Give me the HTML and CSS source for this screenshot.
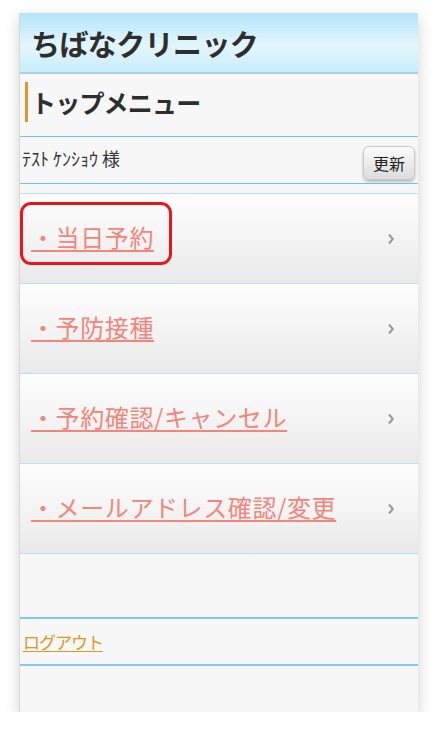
FILE: index.html
```html
<!DOCTYPE html>
<html lang="ja">
<head>
<meta charset="utf-8">
<title>ちばなクリニック</title>
<link rel="stylesheet" href="styles.css">
</head>
<body>
<div class="card">
  <header class="header"><h1>ちばなクリニック</h1></header>
  <div class="page-title"><h2>トップメニュー</h2></div>
  <div class="user-row">
    <span class="user-name">ﾃｽﾄ ｹﾝｼｮｳ 様</span>
    <button class="refresh">更新</button>
  </div>
  <div class="spacer-small"></div>
  <ul class="menu">
    <li class="menu-item first">
      <a href="#">・当日予約</a>
      <svg class="chev" width="8" height="12" viewBox="0 0 8 12"><path d="M2 1.5 L5.8 6 L2 10.5" fill="none" stroke="#999" stroke-width="2"/></svg>
      <span class="highlight"></span>
    </li>
    <li class="menu-item">
      <a href="#">・予防接種</a>
      <svg class="chev" width="8" height="12" viewBox="0 0 8 12"><path d="M2 1.5 L5.8 6 L2 10.5" fill="none" stroke="#999" stroke-width="2"/></svg>
    </li>
    <li class="menu-item">
      <a href="#">・予約確認/キャンセル</a>
      <svg class="chev" width="8" height="12" viewBox="0 0 8 12"><path d="M2 1.5 L5.8 6 L2 10.5" fill="none" stroke="#999" stroke-width="2"/></svg>
    </li>
    <li class="menu-item">
      <a href="#">・メールアドレス確認/変更</a>
      <svg class="chev" width="8" height="12" viewBox="0 0 8 12"><path d="M2 1.5 L5.8 6 L2 10.5" fill="none" stroke="#999" stroke-width="2"/></svg>
    </li>
  </ul>
  <div class="spacer-large"></div>
  <div class="logout-row"><a href="#">ログアウト</a></div>
  <div class="footer-space"></div>
</div>
</body>
</html>
```
FILE: styles.css
```css
* { box-sizing: border-box; }
html, body { margin: 0; padding: 0; background: #ffffff; }
body {
  padding: 13px 18px 0 19px;
  font-family: "Noto Sans CJK JP", "Noto Sans", sans-serif;
  color: #333;
}
.card {
  background: #f7f7f7;
  border-left: 1px solid #d8d8d8;
  box-shadow: 0 5px 14px rgba(0,0,0,0.18);
  height: 699px;
  display: flex;
  flex-direction: column;
}
.header {
  height: 61px;
  background: linear-gradient(to bottom, #b3e5fa 0%, #e4f6fd 55%, #c8ecfb 100%);
  border-bottom: 2px solid #a9cfe0;
  display: flex;
  align-items: center;
  padding-left: 11px;
}
.header h1 {
  margin: 0;
  font-size: 29px;
  font-weight: 700;
  color: #2e2e2e;
  letter-spacing: -0.6px;
  line-height: 1;
  padding-top: 2px;
}
.page-title {
  height: 63px;
  border-bottom: 1px solid #6fc6ea;
  padding: 8px 0 0 5px;
}
.page-title h2 {
  margin: 0;
  height: 40px;
  border-left: 3px solid #d9982b;
  padding-left: 3px;
  font-size: 25px;
  font-weight: 700;
  color: #2e2e2e;
  line-height: 40px;
  letter-spacing: -0.8px;
}
.user-row {
  height: 47px;
  border-bottom: 1px solid #6fc6ea;
  display: flex;
  align-items: center;
  justify-content: space-between;
  padding: 0 3px 0 2px;
}
.user-name {
  font-size: 18px;
  color: #333;
  margin-top: -4px;
  letter-spacing: 0;
}
.refresh {
  width: 52px;
  height: 34px;
  margin-top: 5px;
  font-family: "Noto Sans CJK JP", sans-serif;
  font-size: 16px;
  color: #222;
  background: linear-gradient(to bottom, #fbfbfb, #dcdcdc);
  border: 1px solid #c9c9c9;
  border-radius: 6px;
  box-shadow: 0 2px 3px rgba(0,0,0,0.25);
  padding: 0;
}
.spacer-small {
  height: 10px;
  border-bottom: 1px solid #b7e1f1;
}
.menu {
  list-style: none;
  margin: 0;
  padding: 0;
}
.menu-item {
  position: relative;
  height: 90px;
  border-bottom: 1px solid #b7e1f1;
  background: linear-gradient(to bottom, #fdfdfd 0%, #f4f4f4 50%, #e9e9e9 100%);
  display: flex;
  align-items: center;
  justify-content: space-between;
  padding: 0 23px 0 11px;
}
.menu-item a {
  font-size: 24px;
  color: #f3857a;
  text-decoration: underline;
  text-underline-offset: 3px;
  text-decoration-thickness: 2px;
  font-weight: 400;
  letter-spacing: 0.6px;
  margin-top: -5px;
}
.chev { display: block; }
.highlight {
  position: absolute;
  left: 0;
  top: 8px;
  width: 152px;
  height: 63px;
  border: 3px solid #e8151b;
  border-radius: 11px;
  pointer-events: none;
}
.spacer-large {
  height: 65px;
  border-bottom: 2px solid #7ccbf0;
}
.logout-row {
  height: 47px;
  border-bottom: 2px solid #7ccbf0;
  display: flex;
  align-items: center;
  padding-left: 3px;
}
.logout-row a {
  font-size: 17px;
  color: #d89a22;
  text-decoration: underline;
  text-underline-offset: 2px;
  letter-spacing: -1px;
}
.footer-space { flex: 1; }
```
